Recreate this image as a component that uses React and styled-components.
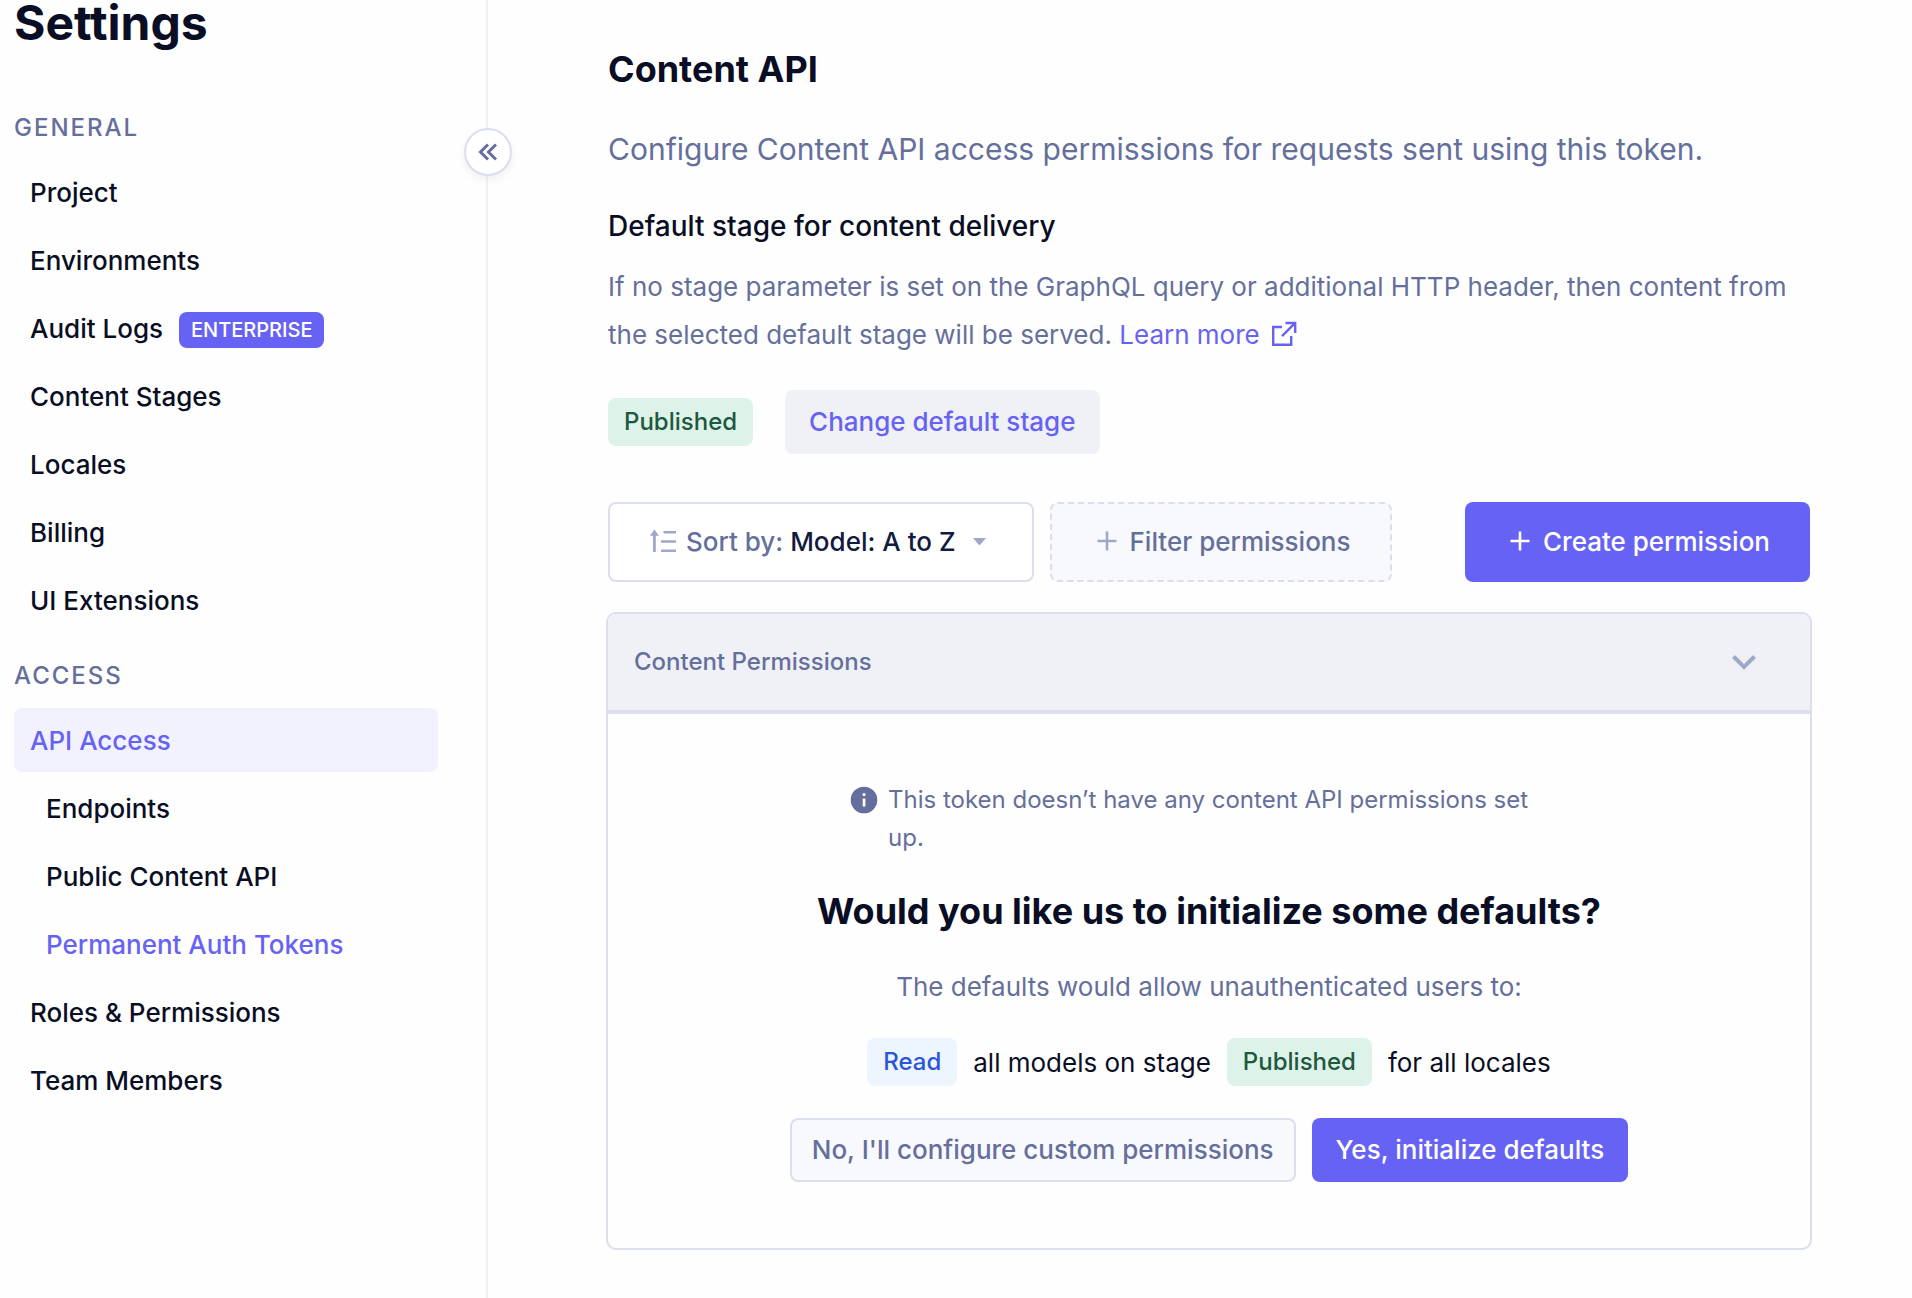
import React from 'react';
import styled, { createGlobalStyle, css } from 'styled-components';

const colors = {
    ink: '#090e24',
    navy: '#111a3f',
    muted: '#656f9b',
    faint: '#9fa8c9',
    brand: '#6663f4',
    brandSoft: '#f2f1fe',
    border: '#dbdeed',
    line: '#eff0f8',
    panel: '#f0f1f7',
    soft: '#f8f9fc',
    green: '#20573f',
    greenSoft: '#ddf3e9',
    blue: '#2c55dc',
    blueSoft: '#edf5ff',
};

const GlobalStyle = createGlobalStyle`
    *, *::before, *::after {
        box-sizing: border-box;
    }

    body {
        margin: 0;
        background: #fefefe;
        color: ${colors.ink};
        font-family: Inter, 'Liberation Sans', sans-serif;
        font-size: 26px;
        -webkit-font-smoothing: antialiased;
    }

    button {
        font-family: inherit;
        cursor: pointer;
    }

    svg {
        display: block;
        flex: none;
    }
`;

const Page = styled.div`
    display: flex;
    min-height: 100vh;
`;

const Sidebar = styled.aside`
    position: relative;
    flex: none;
    width: 488px;
    padding: 0 48px 0 14px;
    border-right: 2px solid ${colors.line};
`;

const SidebarTitle = styled.h1`
    margin: 0 0 66px;
    font-size: 48px;
    font-weight: 700;
    line-height: 46px;
`;

const GroupTitle = styled.h2`
    margin: 0 0 16px;
    color: ${colors.muted};
    font-size: 24px;
    font-weight: 500;
    line-height: 32px;
    letter-spacing: 2px;
    text-transform: uppercase;
`;

const NavList = styled.ul`
    display: flex;
    flex-direction: column;
    gap: 4px;
    margin: 0 0 28px;
    padding: 0;
    list-style: none;
`;

const NavLink = styled.a`
    display: flex;
    align-items: center;
    gap: 16px;
    height: 64px;
    padding: 0 16px 0 ${({ $nested }) => ($nested ? '32px' : '16px')};
    border-radius: 8px;
    background: ${({ $selected }) => ($selected ? colors.brandSoft : 'transparent')};
    color: ${({ $active }) => ($active ? colors.brand : colors.ink)};
    font-weight: 500;
    text-decoration: none;
`;

const PlanBadge = styled.span`
    margin-top: 4px;
    padding: 0 12px;
    border-radius: 8px;
    background: ${colors.brand};
    color: #fff;
    font-size: 20px;
    line-height: 36px;
`;

const CollapseButton = styled.button`
    position: absolute;
    top: 128px;
    right: -26px;
    display: grid;
    place-items: center;
    width: 48px;
    height: 48px;
    padding: 0;
    border: 2px solid ${colors.border};
    border-radius: 50%;
    background: #fff;
    color: ${colors.muted};
    box-shadow: 0 4px 8px rgba(9, 14, 36, 0.06);
`;

const Main = styled.main`
    flex: 1;
    min-width: 0;
    padding: 47px 102px 48px 120px;
`;

const Title = styled.h2`
    margin: 0;
    font-size: 36px;
    font-weight: 700;
    line-height: 44px;
`;

const Lead = styled.p`
    margin: 34px 0 0;
    color: ${colors.muted};
    font-size: 30px;
    line-height: 48px;
`;

const Subtitle = styled.h3`
    margin: 33px 0 0;
    font-size: 28px;
    font-weight: 500;
    line-height: 40px;
`;

const Description = styled.p`
    margin: 17px 0 0;
    color: ${colors.muted};
    line-height: 48px;
`;

const MoreLink = styled.a`
    color: ${colors.brand};
    text-decoration: none;

    svg {
        display: inline-block;
        margin-left: 8px;
        vertical-align: -6px;
    }
`;

const StageRow = styled.div`
    display: flex;
    align-items: center;
    gap: 32px;
    margin-top: 31px;
`;

const tones = {
    green: css`
        background: ${colors.greenSoft};
        color: ${colors.green};
    `,
    blue: css`
        background: ${colors.blueSoft};
        color: ${colors.blue};
    `,
};

const Tag = styled.span`
    padding: 0 16px;
    border-radius: 8px;
    font-size: 24px;
    font-weight: 500;
    line-height: 48px;
    ${({ $tone }) => tones[$tone]}
`;

const variants = {
    primary: css`
        background: ${colors.brand};
        color: #fff;
    `,
    ghost: css`
        background: ${colors.panel};
        color: ${colors.brand};
    `,
    outline: css`
        padding: 0 20px 2px;
        border: 2px solid ${colors.border};
        background: ${colors.soft};
        color: ${colors.muted};
    `,
    dashed: css`
        border: 2px dashed ${colors.border};
        background: ${colors.soft};
        color: ${colors.muted};
    `,
    select: css`
        border: 2px solid ${colors.border};
        background: #fff;
        color: ${colors.muted};
    `,
};

const Button = styled.button`
    display: inline-flex;
    align-items: center;
    justify-content: center;
    gap: 8px;
    height: ${({ $large }) => ($large ? '80px' : '64px')};
    padding: 0 ${({ $large }) => ($large ? '40px' : '24px')} 2px;
    border: 0;
    border-radius: 8px;
    font-size: 26px;
    font-weight: 500;
    white-space: nowrap;
    ${({ $variant }) => variants[$variant]}

    strong {
        color: ${colors.navy};
        font-weight: 500;
    }
`;

const Toolbar = styled.div`
    display: flex;
    gap: 16px;
    margin-top: 48px;

    > :last-child {
        margin-left: auto;
    }
`;

const Card = styled.section`
    margin: 30px -2px 0;
    border: 2px solid ${colors.border};
    border-radius: 10px;
    overflow: hidden;
`;

const CardHeader = styled.header`
    display: flex;
    align-items: center;
    justify-content: space-between;
    height: 100px;
    padding: 0 50px 2px 26px;
    border-bottom: 4px solid ${colors.border};
    background: ${colors.panel};
`;

const CardTitle = styled.h3`
    margin: 0;
    color: ${colors.muted};
    font-size: 24px;
    font-weight: 500;
`;

const ToggleButton = styled.button`
    padding: 0;
    border: 0;
    background: none;
    color: ${colors.faint};
`;

const CardBody = styled.div`
    display: flex;
    flex-direction: column;
    align-items: center;
    padding: 67px 24px 66px;
`;

const Notice = styled.p`
    display: flex;
    gap: 8px;
    max-width: 722px;
    margin: 0;
    color: ${colors.muted};
    font-size: 24px;
    line-height: 38px;

    svg {
        margin-top: 3px;
    }
`;

const Question = styled.h3`
    margin: 30px 0 0;
    font-size: 36px;
    font-weight: 700;
    line-height: 48px;
`;

const Hint = styled.p`
    margin: 32px 0 0;
    color: ${colors.muted};
    line-height: 40px;
`;

const Rule = styled.div`
    display: flex;
    align-items: center;
    gap: 16px;
    margin-top: 31px;
`;

const Actions = styled.div`
    display: flex;
    gap: 16px;
    margin-top: 32px;
`;

const CollapseIcon = () => (
    <svg width="24" height="24" viewBox="0 0 24 24" fill="none" stroke="currentColor" strokeWidth="3">
        <path d="M12 4.5 4.5 12l7.5 7.5M20 4.5 12.5 12l7.5 7.5" />
    </svg>
);

const ExternalIcon = () => (
    <svg width="32" height="32" viewBox="0 0 32 32" fill="none" stroke="currentColor" strokeWidth="2.4">
        <path d="M14 9H5.200V26.800H23.200V18M17.500 5H27.200V15M27 5.200 14 18.200" />
    </svg>
);

const SortIcon = () => (
    <svg width="28" height="28" viewBox="0 0 28 28" fill={colors.faint}>
        <path d="M4.400 2.500 9 8.700H5.800V25H3V8.700H-.2ZM13.500 4H26V6.600H13.500ZM11 13.200H26V15.800H11ZM11 22.400H26V25H11Z" />
    </svg>
);

const CaretIcon = () => (
    <svg width="28" height="24" viewBox="0 0 28 24" fill={colors.faint}>
        <path d="M9 9h13l-6.500 7.500z" />
    </svg>
);

const PlusIcon = ({ color = 'currentColor' }) => (
    <svg width="30" height="30" viewBox="0 0 30 30" fill="none" stroke={color} strokeWidth="2.6">
        <path d="M15 5.500v19M5.500 15h19" />
    </svg>
);

const ChevronIcon = () => (
    <svg width="32" height="32" viewBox="0 0 32 32" fill="none" stroke="currentColor" strokeWidth="4">
        <path d="m5.500 11.500 10.500 10.500 10.500-10.500" />
    </svg>
);

const InfoIcon = () => (
    <svg width="32" height="32" viewBox="0 0 32 32">
        <circle cx="16" cy="16" r="13.3" fill={colors.muted} />
        <path d="M14.700 9.300h2.700V12h-2.700zM14.700 14.600h2.700v8h-2.700z" fill="#fff" />
    </svg>
);

const groups = [
    {
        title: 'General',
        items: [
            { label: 'Project' },
            { label: 'Environments' },
            { label: 'Audit Logs', badge: 'ENTERPRISE' },
            { label: 'Content Stages' },
            { label: 'Locales' },
            { label: 'Billing' },
            { label: 'UI Extensions' },
        ],
    },
    {
        title: 'Access',
        items: [
            { label: 'API Access', active: true, selected: true },
            { label: 'Endpoints', nested: true },
            { label: 'Public Content API', nested: true },
            { label: 'Permanent Auth Tokens', nested: true, active: true },
            { label: 'Roles & Permissions' },
            { label: 'Team Members' },
        ],
    },
];

const SettingsNav = () => (
    <Sidebar>
        <SidebarTitle>Settings</SidebarTitle>
        <nav>
            {groups.map((group) => (
                <React.Fragment key={group.title}>
                    <GroupTitle>{group.title}</GroupTitle>
                    <NavList>
                        {group.items.map(({ label, badge, active, selected, nested }) => (
                            <li key={label}>
                                <NavLink href="#" $active={active} $selected={selected} $nested={nested}>
                                    {label}
                                    {badge && <PlanBadge>{badge}</PlanBadge>}
                                </NavLink>
                            </li>
                        ))}
                    </NavList>
                </React.Fragment>
            ))}
        </nav>
        <CollapseButton type="button" aria-label="Collapse sidebar">
            <CollapseIcon />
        </CollapseButton>
    </Sidebar>
);

const PermissionsCard = () => (
    <Card>
        <CardHeader>
            <CardTitle>Content Permissions</CardTitle>
            <ToggleButton type="button" aria-label="Toggle content permissions">
                <ChevronIcon />
            </ToggleButton>
        </CardHeader>
        <CardBody>
            <Notice>
                <InfoIcon />
                <span>This token doesn’t have any content API permissions set up.</span>
            </Notice>
            <Question>Would you like us to initialize some defaults?</Question>
            <Hint>The defaults would allow unauthenticated users to:</Hint>
            <Rule>
                <Tag $tone="blue">Read</Tag>
                <span>all models on stage</span>
                <Tag $tone="green">Published</Tag>
                <span>for all locales</span>
            </Rule>
            <Actions>
                <Button type="button" $variant="outline">No, I'll configure custom permissions</Button>
                <Button type="button" $variant="primary">Yes, initialize defaults</Button>
            </Actions>
        </CardBody>
    </Card>
);

const App = () => {
    return (
        <>
            <GlobalStyle />
            <Page>
                <SettingsNav />
                <Main>
                    <Title>Content API</Title>
                    <Lead>Configure Content API access permissions for requests sent using this token.</Lead>
                    <Subtitle>Default stage for content delivery</Subtitle>
                    <Description>
                        If no stage parameter is set on the GraphQL query or additional HTTP header, then content from
                        the selected default stage will be served.{' '}
                        <MoreLink href="#">
                            Learn more
                            <ExternalIcon />
                        </MoreLink>
                    </Description>
                    <StageRow>
                        <Tag $tone="green">Published</Tag>
                        <Button type="button" $variant="ghost">Change default stage</Button>
                    </StageRow>
                    <Toolbar>
                        <Button type="button" $variant="select" $large>
                            <SortIcon />
                            <span>
                                Sort by: <strong>Model: A to Z</strong>
                            </span>
                            <CaretIcon />
                        </Button>
                        <Button type="button" $variant="dashed" $large>
                            <PlusIcon color={colors.faint} />
                            Filter permissions
                        </Button>
                        <Button type="button" $variant="primary" $large>
                            <PlusIcon />
                            Create permission
                        </Button>
                    </Toolbar>
                    <PermissionsCard />
                </Main>
            </Page>
        </>
    );
};

export default App;
